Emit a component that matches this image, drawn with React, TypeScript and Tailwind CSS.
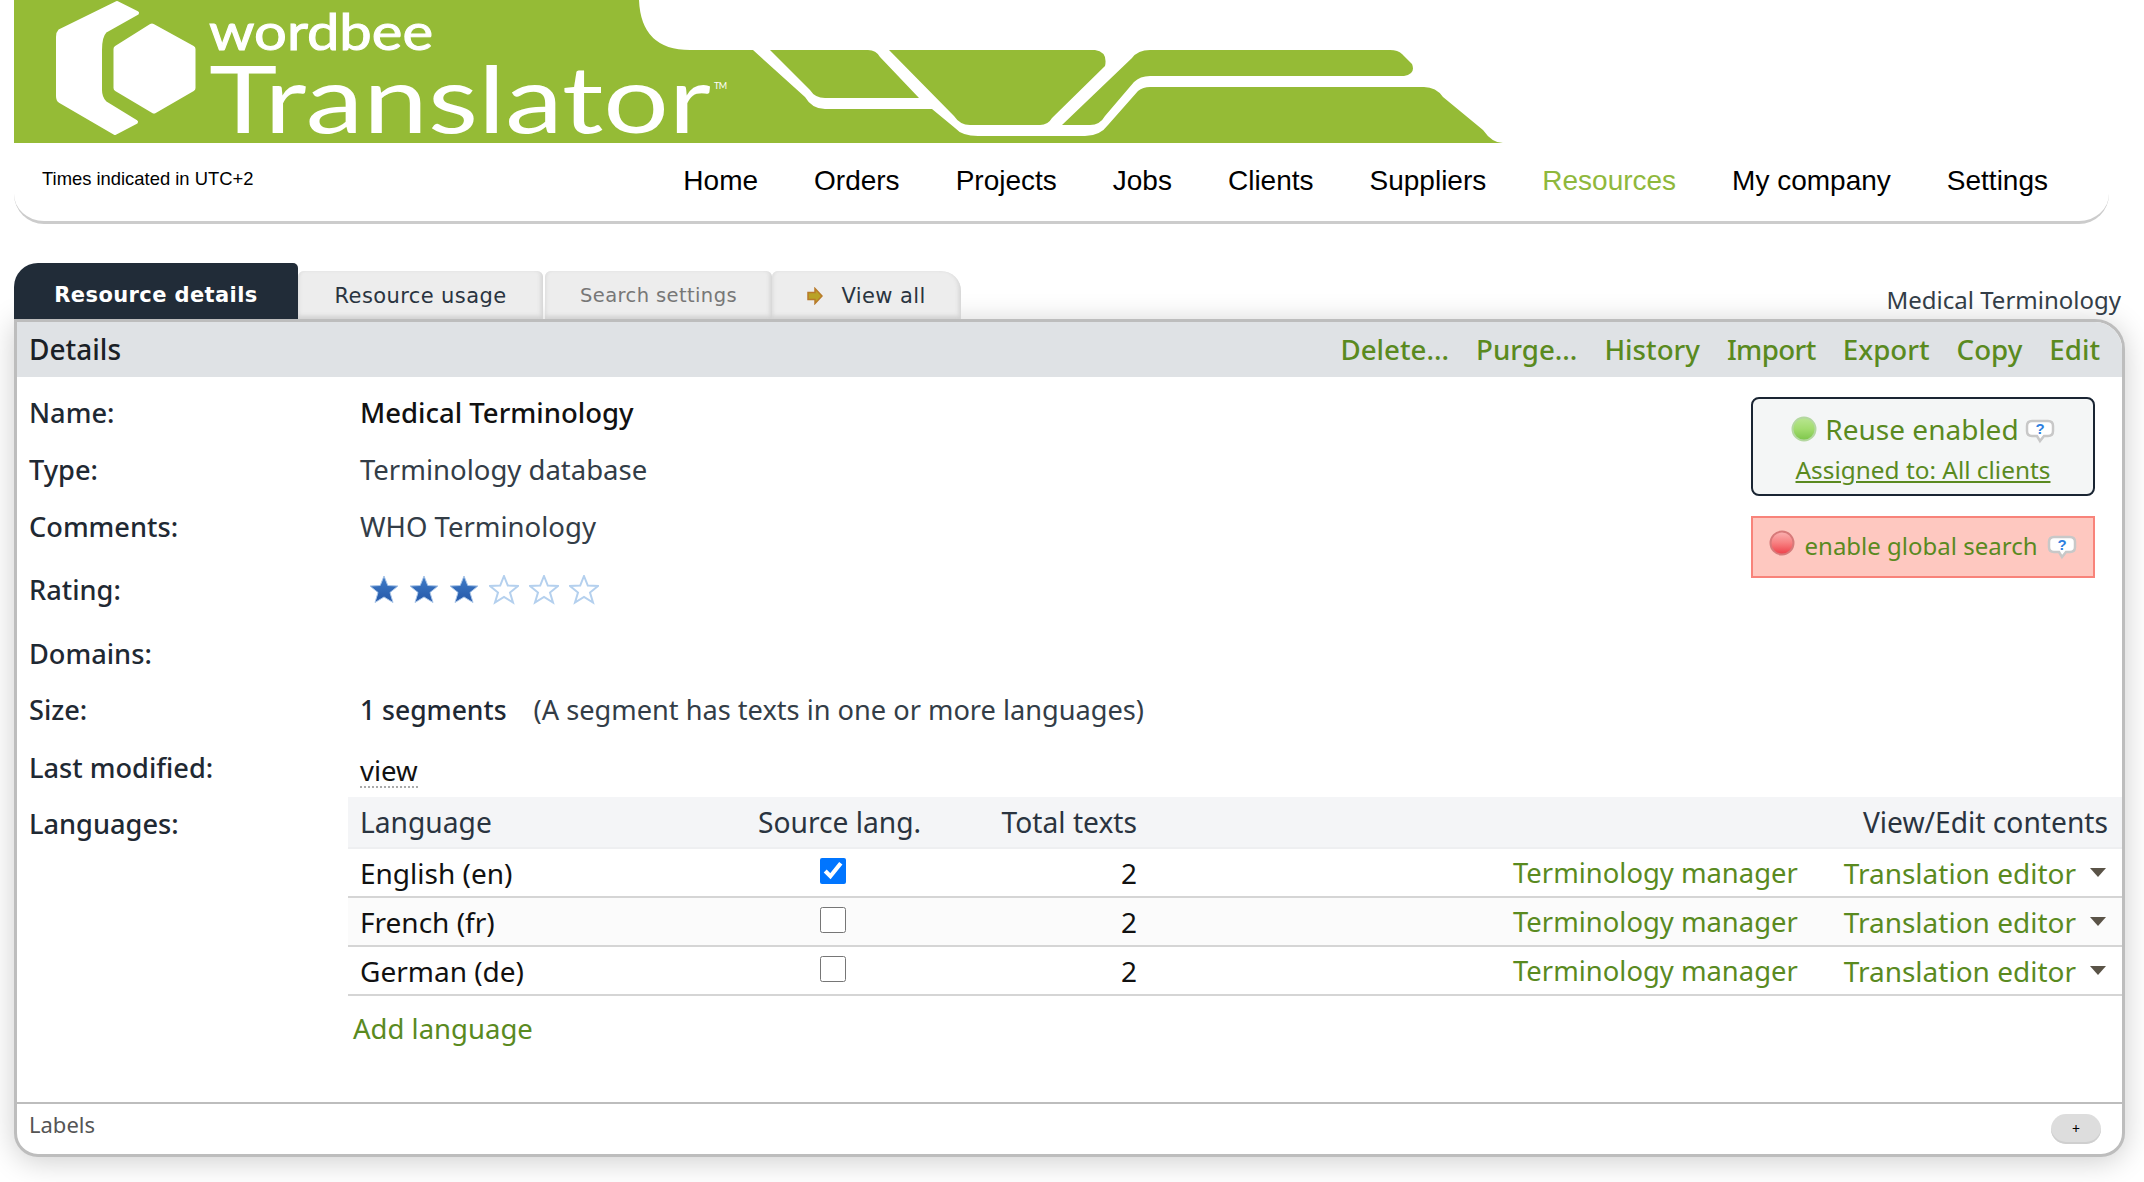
const green = '#95bb36';

function Banner() {
  return (
    <svg width="1503" height="143" viewBox="0 0 1503 143" className="block overflow-visible">
      <path
        fill={green}
        d="M14 0H639Q641 50 690 50H753L805 97Q812 109 825 109H932L955 128Q962 136 978 136H1085Q1100 136 1108 125L1138 91Q1143 87 1150 87H1424Q1436 87 1443 97L1483 130Q1492 143 1503 143H14Z"
      />
      <path fill={green} d="M770 50H868Q876 50 880 57L919 98H825Q815 98 810 90Z" />
      <path fill={green} d="M889 50H1095Q1108 52 1105 66L1052 118Q1048 125 1040 125H970Q960 125 954 116Z" />
      <path fill={green} d="M1062 125H1090Q1100 125 1105 116L1134 82Q1140 76 1150 76H1404Q1416 74 1412 64L1402 54Q1398 50 1390 50H1150Q1138 50 1132 58Z" />
      {/* logo mark */}
      <path fill="#fff" stroke="#fff" strokeWidth="4" strokeLinejoin="round" d="M117 3L137 13L105 31Q100 36 100 50V90Q100 98 105 103L136 122L115 133L60 101Q58 100 58 96V37Q58 33 60 31Z" />
      <path fill="#fff" stroke="#fff" strokeWidth="7" strokeLinejoin="round" d="M152 27L192 49V88L154 110L117 88V49Z" />
      <text x="209" y="50" fontFamily="Lato, sans-serif" fontSize="50" stroke="#fff" strokeWidth="1" fill="#fff" textLength="224" lengthAdjust="spacingAndGlyphs">wordbee</text>
      <text x="209" y="133" fontFamily="Lato, sans-serif" fontSize="94" fill="#fff" textLength="502" lengthAdjust="spacingAndGlyphs">Translator</text>
      <text x="714" y="89" fontFamily="Lato, sans-serif" fontSize="9" fill="#fff" textLength="13">TM</text>
    </svg>
  );
}

function Star({ filled }: { filled: boolean }) {
  const d = 'M15 1L18.8 10.5L29 11L21 17.5L24 27.5L15 22L6 27.5L9 17.5L1 11L11.2 10.5Z';
  return (
    <svg width="30" height="30" viewBox="0 0 30 30">
      <defs>
        <linearGradient id="starFill" x1="0" y1="0" x2="0" y2="1">
          <stop offset="0" stopColor="#3f7cc8" />
          <stop offset="1" stopColor="#2558a8" />
        </linearGradient>
      </defs>
      {filled ? <path d={d} fill="url(#starFill)" stroke="#a9c5e8" strokeWidth="1" /> : <path d={d} fill="#fff" stroke="#b4d0ee" strokeWidth="2" />}
    </svg>
  );
}

function HelpBubble() {
  return (
    <svg width="30" height="26" viewBox="0 0 30 26">
      <path d="M7 3H23Q28 3 28 8V13Q28 18 23 18H19L15 23L12 18H7Q2 18 2 13V8Q2 3 7 3Z" fill="#fff" stroke="#c8c8c8" strokeWidth="2.5" />
      <text x="15" y="15.5" textAnchor="middle" fontFamily="Liberation Sans, sans-serif" fontSize="15" fontWeight="700" fill="#2f7fe0">?</text>
    </svg>
  );
}

function Dot({ top, mid, bottom, edge, id }: { top: string; mid: string; bottom: string; edge: string; id: string }) {
  return (
    <svg width="26" height="26" viewBox="0 0 26 26">
      <defs>
        <linearGradient id={id} x1="0" y1="0" x2="0" y2="1">
          <stop offset="0" stopColor={top} />
          <stop offset="0.5" stopColor={mid} />
          <stop offset="1" stopColor={bottom} />
        </linearGradient>
      </defs>
      <circle cx="13" cy="13" r="11.5" fill={`url(#${id})`} stroke={edge} strokeWidth="2" />
    </svg>
  );
}

function Caret() {
  return <span className="ml-[14px] mr-[2px] mt-[-1px] h-0 w-0 border-x-[8px] border-t-[9px] border-x-transparent border-t-[#5a5347]" />;
}

const navItems = ['Home', 'Orders', 'Projects', 'Jobs', 'Clients', 'Suppliers', 'Resources', 'My company', 'Settings'];
const actions = ['Delete...', 'Purge...', 'History', 'Import', 'Export', 'Copy', 'Edit'];
const languages = [
  { name: 'English (en)', source: true, tint: false },
  { name: 'French (fr)', source: false, tint: true },
  { name: 'German (de)', source: false, tint: false },
];

function Row({ label, children, className }: { label: string; children?: React.ReactNode; className?: string }) {
  return (
    <div className={`flex items-center ${className}`}>
      <div className="w-[331px] shrink-0 text-[27.2px] font-medium text-[#1f2933]">{label}</div>
      {children}
    </div>
  );
}

const tabShade = 'shadow-[inset_-2px_-3px_4px_#d2d2d2,inset_2px_0_3px_#e2e2e2]';

export default function App() {
  return (
    <div className="h-[1182px] overflow-hidden bg-white font-['Noto_Sans',sans-serif] text-[27.5px] leading-[36px]">
      <Banner />

      <div className="ml-[14px] mr-[35px] flex h-[81px] items-start justify-between rounded-b-[30px] border-b-[3px] border-[#cccccc] pl-[28px] pr-[61px] font-['Liberation_Sans',sans-serif]">
        <div className="pt-[26px] text-[18.4px] leading-[20px] text-black">Times indicated in UTC+2</div>
        <nav className="flex gap-[56px] pt-[22px] text-[28px] leading-[32px] text-black">
          {navItems.map((n) => (
            <span key={n} className={n === 'Resources' ? 'text-[#8fb83c]' : ''}>{n}</span>
          ))}
        </nav>
      </div>

      <div className="ml-[14px] mr-[19px] mt-[39px]">
        <div className="relative z-10 flex items-end justify-between">
          <div className="flex items-end font-['DejaVu_Sans',sans-serif] text-[21px] leading-[30px] tracking-[0.4px]">
            <div className="flex h-[56px] w-[284px] items-center justify-center rounded-tl-[24px] rounded-tr-[5px] bg-[#212c38] pt-[7px] font-bold text-white">Resource details</div>
            <div className={`flex h-[48px] w-[245px] items-center justify-center rounded-t-[6px] bg-[#ededed] pt-[1px] text-[#2a3440] ${tabShade}`}>Resource usage</div>
            <div className={`ml-[2px] flex h-[48px] w-[227px] items-center justify-center rounded-t-[6px] bg-[#ededed] pt-[1px] text-[19.5px] text-[#777] ${tabShade}`}>Search settings</div>
            <div className={`flex h-[48px] w-[189px] items-center justify-center gap-[18px] rounded-tl-[6px] rounded-tr-[20px] bg-[#ededed] pt-[1px] text-[#2a3440] ${tabShade}`}>
              <svg width="16" height="18" viewBox="0 0 16 18"><path d="M1 5.5H8V1.5L15 9L8 16.5V12.5H1Z" fill="#b9a227" stroke="#b87a2a" strokeWidth="1.5" /></svg>
              View all
            </div>
          </div>
          <div className="pb-[3px] pr-[4px] text-[24px] leading-[32px] text-[#333d47]">Medical Terminology</div>
        </div>

        <div className="h-[838px] overflow-hidden rounded-b-[24px] rounded-tr-[30px] border-[3px] border-[#bdbdbd] bg-white shadow-[0_4px_30px_rgba(0,0,0,0.2)]">
          <div className="flex h-[55px] items-center justify-between bg-[#dfe2e5] pb-[2px] pl-[12px] pr-[22px]">
            <span className="text-[28px] font-medium text-[#1a2026]">Details</span>
            <div className="flex gap-[27px] text-[27.7px] font-medium text-[#5a8a1f]">
              {actions.map((a) => <span key={a} className={a === 'Import' ? 'tracking-[-0.6px]' : ''}>{a}</span>)}
            </div>
          </div>

          <div className="flex justify-between pl-[12px] pr-[27px]">
            <div className="pt-[8px]">
              <Row label="Name:" className="h-[56px]"><span className="font-medium text-[#111]">Medical Terminology</span></Row>
              <Row label="Type:" className="h-[57px]"><span className="text-[#333d47]">Terminology database</span></Row>
              <Row label="Comments:" className="h-[57px]"><span className="text-[#333d47]">WHO Terminology</span></Row>
              <Row label="Rating:" className="h-[70px]">
                <div className="ml-[9px] flex gap-[10px]">
                  {[1, 2, 3, 4, 5, 6].map((i) => <Star key={i} filled={i <= 3} />)}
                </div>
              </Row>
              <Row label="Domains:" className="h-[57px]" />
              <Row label="Size:" className="h-[56px]">
                <span className="text-[26.5px] font-medium text-[#1f2933]">1 segments</span>
                <span className="ml-[27px] text-[27.2px] text-[#333d47]">(A segment has texts in one or more languages)</span>
              </Row>
              <Row label="Last modified:" className="h-[59px]">
                <span className="mt-[8px] border-b-2 border-dotted border-[#aaaaaa] leading-[30px] text-[#111]">view</span>
              </Row>
            </div>

            <div className="flex w-[344px] flex-col gap-[20px] pt-[20px]">
              <div className="flex h-[99px] flex-col items-center rounded-[8px] border-2 border-[#1a2533] bg-[#f4f6f6] pt-[12px] text-[#5a8a1f]">
                <div className="flex items-center gap-[8px] text-[28px]">
                  <Dot id="on" top="#b9e692" mid="#a2dc6e" bottom="#7cc54a" edge="#b4d8a0" />
                  Reuse enabled
                  <span className="ml-[-2px] mt-[3px]"><HelpBubble /></span>
                </div>
                <div className="mt-[6px] text-[24.4px] leading-[34px] underline">Assigned to: All clients</div>
              </div>
              <div className="flex h-[62px] items-center justify-center gap-[10px] border-2 border-[#f8837a] bg-[#fec8c0] pb-[3px] text-[24px] text-[#5a8a1f]">
                <span className="mt-[-6px]"><Dot id="off" top="#fbb3b3" mid="#f77f80" bottom="#ee3e48" edge="#d77a7a" /></span>
                enable global search
                <span className="mt-[3px]"><HelpBubble /></span>
              </div>
            </div>
          </div>

          <div className="flex pl-[12px]">
            <div className="w-[319px] shrink-0 pt-[9px] text-[27.2px] font-medium text-[#1f2933]">Languages:</div>
            <div className="flex-1">
              <div className="grid h-[52px] grid-cols-[398px_241px_138px_1fr] items-center border-b-2 border-[#eeeff1] bg-[#f4f5f7] pl-[12px] pr-[14px] text-[28.2px] text-[#2a3440]">
                <span>Language</span>
                <span className="whitespace-nowrap">Source lang.</span>
                <span className="whitespace-nowrap text-right">Total texts</span>
                <span className="text-right">View/Edit contents</span>
              </div>
              {languages.map((l) => (
                <div key={l.name} className={`grid h-[49px] grid-cols-[398px_241px_138px_1fr] items-center border-b-[2px] border-[#d5d5d5] pl-[12px] pr-[14px] text-[28px] ${l.tint ? 'bg-[#fbfbfb]' : 'bg-white'}`}>
                  <span className="text-[#111]">{l.name}</span>
                  <div className="ml-[62px] mt-[-3px]">
                    <input type="checkbox" readOnly checked={l.source} className="block h-[26px] w-[26px]" />
                  </div>
                  <span className="text-right text-[#111]">2</span>
                  <div className="flex items-center justify-end text-[#5a8a1f]">
                    <span className="mt-[1px] text-[27.4px]">Terminology manager</span>
                    <span className="ml-[46px]">Translation editor</span>
                    <Caret />
                  </div>
                </div>
              ))}
              <div className="pl-[5px] pt-[15px] text-[#5a8a1f]">Add language</div>
            </div>
          </div>

          <div className="mt-[55px] flex h-[50px] items-start justify-between border-t-[2px] border-[#bdbdbd] pl-[12px] pr-[21px]">
            <span className="pt-[5px] text-[22px] leading-[30px] text-[#555]">Labels</span>
            <span className="mt-[10px] flex h-[30px] w-[50px] items-center justify-center rounded-full bg-[#dddddd] text-[14px] leading-none text-black shadow-[inset_0_-2px_0_#cfcfcf]">+</span>
          </div>
        </div>
      </div>
    </div>
  );
}
